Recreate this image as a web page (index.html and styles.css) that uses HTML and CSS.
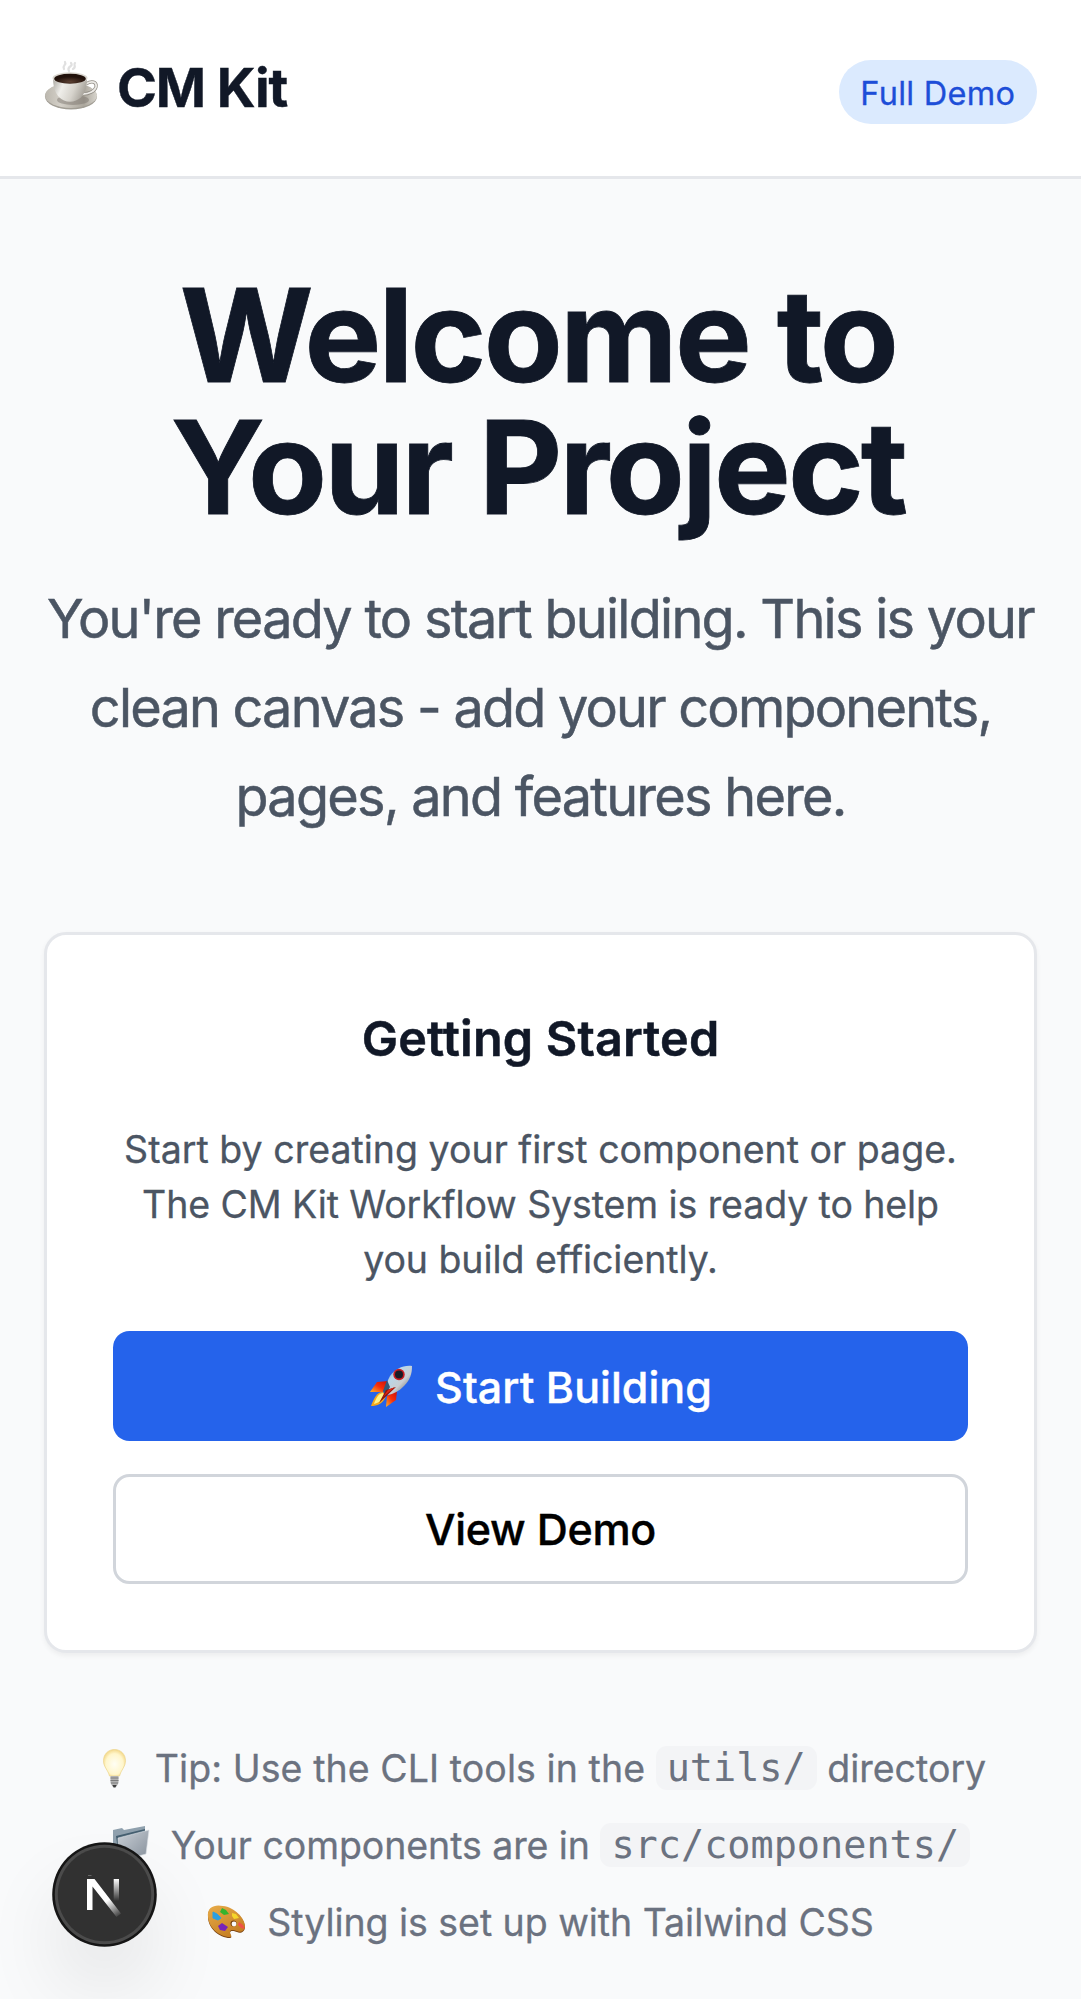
FILE: index.html
```
<!DOCTYPE html>
<html lang="en">
<head>
<meta charset="utf-8">
<title>CM Kit</title>
<link rel="stylesheet" href="styles.css">
</head>
<body>
<header class="header">
  <div class="brand">
    <svg class="brand-icon" viewBox="0 0 55 55" aria-hidden="true">
      <defs>
        <linearGradient id="cup" x1="0" x2="1" y1="0" y2=".3"><stop offset="0" stop-color="#a9a69f"/><stop offset=".35" stop-color="#efeeea"/><stop offset=".7" stop-color="#d6d3cc"/><stop offset="1" stop-color="#aaa69e"/></linearGradient>
        <linearGradient id="saucer" x1="0" x2="1"><stop offset="0" stop-color="#bbb7ae"/><stop offset=".3" stop-color="#d4d0c8"/><stop offset=".75" stop-color="#aba69c"/><stop offset="1" stop-color="#d8d5ce"/></linearGradient>
        <radialGradient id="coffee" cx=".5" cy=".8"><stop offset="0" stop-color="#5b4032"/><stop offset="1" stop-color="#21110b"/></radialGradient>
      </defs>
      <path d="M20 9c-2-4 3-4 1-7M25 11c-3-5 5-4 2-8M29 9c4-2 0-4 2-6" fill="none" stroke="#d5d5d5" stroke-width="2.2" stroke-linecap="round" opacity=".75"/>
      <ellipse cx="27" cy="36.5" rx="26" ry="13" fill="#a19d94"/>
      <ellipse cx="27" cy="35.5" rx="26" ry="12.5" fill="url(#saucer)"/>
      <ellipse cx="29" cy="40" rx="16" ry="5" fill="#77726a" opacity=".45"/>
      <path d="M42 24c6-4 11-2 10 3-1 4-7 7-13 7" fill="none" stroke="#918d85" stroke-width="3.2"/>
      <path d="M42 24c6-4 11-2 10 3-1 4-7 7-13 7" fill="none" stroke="#eceae6" stroke-width="1.8"/>
      <path d="M9 18c0 13 5 20 11 22.500q6 2.500 12 0c7-2.500 11-10 11-22.500z" fill="url(#cup)"/>
      <ellipse cx="26" cy="18" rx="17.500" ry="5.800" fill="#d9d6cf"/>
      <ellipse cx="26" cy="18.700" rx="15.800" ry="5" fill="url(#coffee)"/>
    </svg>
    <span class="brand-name">CM Kit</span>
  </div>
  <span class="badge">Full Demo</span>
</header>

<main class="main">
  <h1 class="title"><span class="line">Welcome to</span><span class="line line-b">Your Project</span></h1>
  <p class="lead"><span class="line">You're ready to start building. This is your</span><span class="line line-b">clean canvas - add your components,</span><span class="line">pages, and features here.</span></p>

  <section class="card">
    <h2 class="card-title">Getting Started</h2>
    <p class="card-text"><span class="line">Start by creating your first component or page.</span><span class="line line-b">The CM Kit Workflow System is ready to help</span><span class="line line-c">you build efficiently.</span></p>
    <div class="actions">
      <button class="btn btn-primary" type="button">
        <svg class="btn-icon" viewBox="0 0 44 44" aria-hidden="true">
          <defs>
            <linearGradient id="hull" x1="0" y1="0" x2="1" y2="1"><stop offset="0" stop-color="#5f93bd"/><stop offset=".35" stop-color="#b9d6e8"/><stop offset=".6" stop-color="#c9ced2"/><stop offset="1" stop-color="#45494e"/></linearGradient>
            <linearGradient id="fin" x1="1" y1="0" x2="0" y2="1"><stop offset="0" stop-color="#c90f0a"/><stop offset=".5" stop-color="#f52f0b"/><stop offset="1" stop-color="#ffb32a"/></linearGradient>
          </defs>
          <path d="M19 17 8 18 1 28l13 0z" fill="url(#fin)"/>
          <path d="M28 27l-1 9-10 7 1-11z" fill="url(#fin)"/>
          <path d="M43 2c-9-1-17 3-22 10-2 4-4 8-6 15l3 4c7-1 12-4 17-9 6-6 8-12 8-20z" fill="url(#hull)"/>
          <path d="M18 16l-4 11 3 3 4-7z" fill="#315878"/>
          <path d="M14 28c-6 0-9 6-12 14 6 0 12-2 15-10z" fill="#f5a81c"/>
          <path d="M14 29c-5 1-7 5-9 11 4-1 8-3 10-9z" fill="#fff38a"/>
          <path d="M27 23 10 39l7-13z" fill="#8e140c"/>
          <path d="M26 23 14 33l5-7z" fill="#e32614"/>
          <circle cx="30" cy="10.500" r="5.700" fill="#c51b20"/>
          <circle cx="30" cy="10.500" r="4" fill="#171c25"/>
        </svg>
        <span class="start-label">Start Building</span>
      </button>
      <button class="btn btn-outline" type="button"><span class="view-label">View Demo</span></button>
    </div>
  </section>

  <div class="tips">
    <p class="tip">
      <svg class="tip-icon" viewBox="0 0 39 39" aria-hidden="true">
        <defs><radialGradient id="bulb" cx=".5" cy=".55" r=".6"><stop offset="0" stop-color="#fffef4"/><stop offset=".65" stop-color="#fff6cc"/><stop offset="1" stop-color="#f0cf75"/></radialGradient></defs>
        <path d="M19.500.500c-6.500 0-11 5-11 11.200 0 6.500 4.500 9 6 15.300h10c1.500-6.300 6-8.800 6-15.300 0-6.200-4.500-11.200-11-11.200z" fill="url(#bulb)" stroke="#ecd48a" stroke-width=".7"/>
        <path d="M15.500 27h8v7l-2 3.500h-4l-2-3.500z" fill="#b2b2b2"/>
        <path d="M15.500 29h8M15.500 31.500h8M16 34h7" stroke="#7c7c7c" stroke-width="1"/>
        <path d="M17.500 36h4l-1 2.500h-2z" fill="#3d3d3d"/>
      </svg>
      <span class="tip-a">Tip: Use the CLI tools in the</span>
      <code class="code">utils/</code>
      <span class="tip-b">directory</span>
    </p>
    <p class="tip">
      <svg class="tip-icon" viewBox="0 0 39 39" aria-hidden="true">
        <defs><linearGradient id="folder" x1="0" y1="0" x2="1" y2="1"><stop offset="0" stop-color="#cbd1d8"/><stop offset="1" stop-color="#858f9a"/></linearGradient></defs>
        <path d="M2 4l9-2 2 2 21-4v6L14 33 2 34z" fill="#8fa0ad"/>
        <path d="M5 10 34 3v3L8 32z" fill="#455f70"/>
        <path d="M7 12 38 4l-3 24L8 35z" fill="url(#folder)" stroke="#dce1e6" stroke-width=".6"/>
      </svg>
      <span class="tip-c">Your components are in</span>
      <code class="code">src/components/</code>
    </p>
    <p class="tip">
      <svg class="tip-icon" viewBox="0 0 39 39" aria-hidden="true">
        <defs><linearGradient id="wood" x1="0" y1="0" x2=".6" y2="1"><stop offset="0" stop-color="#e8ac49"/><stop offset="1" stop-color="#c57e23"/></linearGradient></defs>
        <path d="M1 13C0 4 8 1 16 3c11 1 22 12 22 20 0 5-5 7-8 5-3-1-7-2-7 1 0 2 3 5 0 5C12 34 1 24 1 13z" fill="#7c4513" transform="translate(0 1)"/>
        <path d="M1 13C0 4 8 1 16 3c11 1 22 12 22 20 0 5-5 7-8 5-3-1-7-2-7 1 0 2 3 5 0 5C12 34 1 24 1 13z" fill="url(#wood)"/>
        <circle cx="26.500" cy="20.500" r="3" fill="#75420f"/><circle cx="27" cy="21" r="2.400" fill="#f9fafb"/>
        <path d="M6 9l4 2 4 4-3 2-5-2z" fill="#2d9fe0" stroke="#2d9fe0" stroke-width="1"/>
        <path d="M15 5l4 2 3 4-5 1-4-3z" fill="#35b42d"/>
        <path d="M25 10l4 1 3 4-5 1-2-3z" fill="#f5d52b"/>
        <path d="M32 19l4 3 2 4-4-1-3-3z" fill="#ef5147"/>
        <path d="M11 23l4-3 6 4-3 4-5-1z" fill="#7723b8"/>
      </svg>
      <span class="tip-d">Styling is set up with Tailwind CSS</span>
    </p>
  </div>
</main>

<div class="dev-badge">
  <svg class="dev-logo" viewBox="0 0 105 105" aria-hidden="true">
    <defs>
      <linearGradient id="diag" gradientUnits="userSpaceOnUse" x1="56" y1="58" x2="68" y2="75"><stop offset="0" stop-color="#fff"/><stop offset="1" stop-color="#fff" stop-opacity="0"/></linearGradient>
      <linearGradient id="bar" x1="0" y1="0" x2="0" y2="1"><stop offset="0" stop-color="#fff"/><stop offset="1" stop-color="#fff" stop-opacity="0"/></linearGradient>
    </defs>
    <circle cx="52.500" cy="52.500" r="52.300" fill="#151515"/>
    <circle cx="52.500" cy="52.500" r="49.700" fill="#4b4b4b"/>
    <circle cx="52.500" cy="52.500" r="46.700" fill="#313131"/>
    <path d="M35 37h7.500L69 71.500 64.500 75 40.500 44.500V68H35z" fill="url(#diag)"/>
    <path d="M61.700 37H67v22h-5.300z" fill="url(#bar)"/>
    <path d="M36 33.500h3.500" stroke="#666" stroke-width="1"/>
  </svg>
</div>
</body>
</html>
```
FILE: styles.css
```
* { box-sizing: border-box; margin: 0; padding: 0; }

body {
  width: 1081px;
  height: 1999px;
  overflow: hidden;
  background: #f9fafb;
  font-family: Inter, "Liberation Sans", sans-serif;
  color: #111827;
}

.line { display: block; white-space: nowrap; }

/* Header */
.header {
  display: flex;
  align-items: flex-start;
  justify-content: space-between;
  height: 179px;
  padding: 44px 44px 0;
  background: #fff;
  border-bottom: 3px solid #e5e7eb;
}
.brand { display: flex; align-items: center; height: 88px; gap: 18px; }
.brand-icon { width: 55px; height: 55px; margin-top: -2px; }
.brand-name { font-size: 54px; font-weight: 700; line-height: 88px; letter-spacing: -0.02em; white-space: nowrap; -webkit-text-stroke: 0.4px; }
.badge {
  width: 198.4px;
  height: 63.4px;
  margin-top: 16.4px;
  padding-top: 1.5px;
  border-radius: 32px;
  background: #dbeafe;
  color: #1d4ed8;
  font-size: 32.5px;
  line-height: 63px;
  letter-spacing: 0.008em;
  text-align: center;
  white-space: nowrap;
  -webkit-text-stroke: 0.3px;
}

/* Hero */
.main { padding: 90px 44px 0; text-align: center; }
.title { padding-right: 5px; font-size: 129px; font-weight: 700; line-height: 132px; letter-spacing: -0.0218em; -webkit-text-stroke: 0.8px; }
.title .line-b { letter-spacing: -0.0229em; }
.lead { margin-top: 40.7px; font-size: 54px; line-height: 89.4px; letter-spacing: -0.0319em; color: #4b5563; -webkit-text-stroke: 0.5px; }
.lead .line-b { letter-spacing: -0.0329em; padding-top: 1.4px; line-height: 88px; }

/* Card */
.card {
  height: 720.5px;
  margin-top: 90.3px;
  padding: 65px 65.75px 0;
  background: #fff;
  border: 3px solid #e5e7eb;
  border-radius: 22px;
  box-shadow: 0 2.75px 5.5px rgba(0, 0, 0, 0.05);
}
.card-title { font-size: 48.5px; font-weight: 600; line-height: 77px; letter-spacing: 0.0035em; -webkit-text-stroke: 0.5px; }
.card-text { margin-top: 44.5px; font-size: 37.5px; line-height: 55px; letter-spacing: 0.0005em; color: #4b5563; -webkit-text-stroke: 0.3px; }
.card-text .line-b { letter-spacing: -0.0027em; }
.card-text .line-c { letter-spacing: -0.0014em; }
.actions { display: flex; flex-direction: column; gap: 33px; margin-top: 44px; }
.btn {
  display: flex;
  align-items: center;
  justify-content: center;
  gap: 22px;
  height: 110px;
  border: 0;
  border-radius: 16.5px;
  font: 500 43px/60px Inter, "Liberation Sans", sans-serif;
  white-space: nowrap;
  -webkit-text-stroke: 0.4px;
}
.btn-primary { padding-top: 2px; background: #2563eb; color: #fff; }
.btn-outline { padding-top: 1px; background: #fff; color: #000; border: 3px solid #d1d5db; }
.btn-icon { width: 44px; height: 44px; margin-top: -1px; -webkit-text-stroke: 0; }
.start-label { letter-spacing: 0.001em; }
.view-label { letter-spacing: -0.006em; }

/* Tips */
.tips { display: flex; flex-direction: column; gap: 22px; margin-top: 88px; font-size: 37.5px; line-height: 55px; color: #6b7280; -webkit-text-stroke: 0.3px; }
.tip { display: flex; align-items: center; justify-content: center; height: 55px; gap: 10.5px; white-space: nowrap; }
.tip-icon { width: 39px; height: 39px; margin-right: 10.5px; }
.tip-a { letter-spacing: 0.002em; }
.tip-b { letter-spacing: 0; }
.tip-c { letter-spacing: -0.002em; }
.tip-d { letter-spacing: -0.0012em; }
.code {
  height: 44px;
  padding: 0 11px;
  border-radius: 11px;
  background: #f3f4f6;
  font: 38.5px/44px "DejaVu Sans Mono", "Liberation Mono", monospace;
  -webkit-text-stroke: 0;
}

/* Floating dev tools indicator, drawn above the page */
.dev-badge {
  position: absolute;
  left: 52px;
  top: 1842px;
  width: 105px;
  height: 105px;
  border-radius: 50%;
  box-shadow: 0 44px 88px -22px rgba(0, 0, 0, 0.24);
}
.dev-logo { display: block; width: 105px; height: 105px; }
```
